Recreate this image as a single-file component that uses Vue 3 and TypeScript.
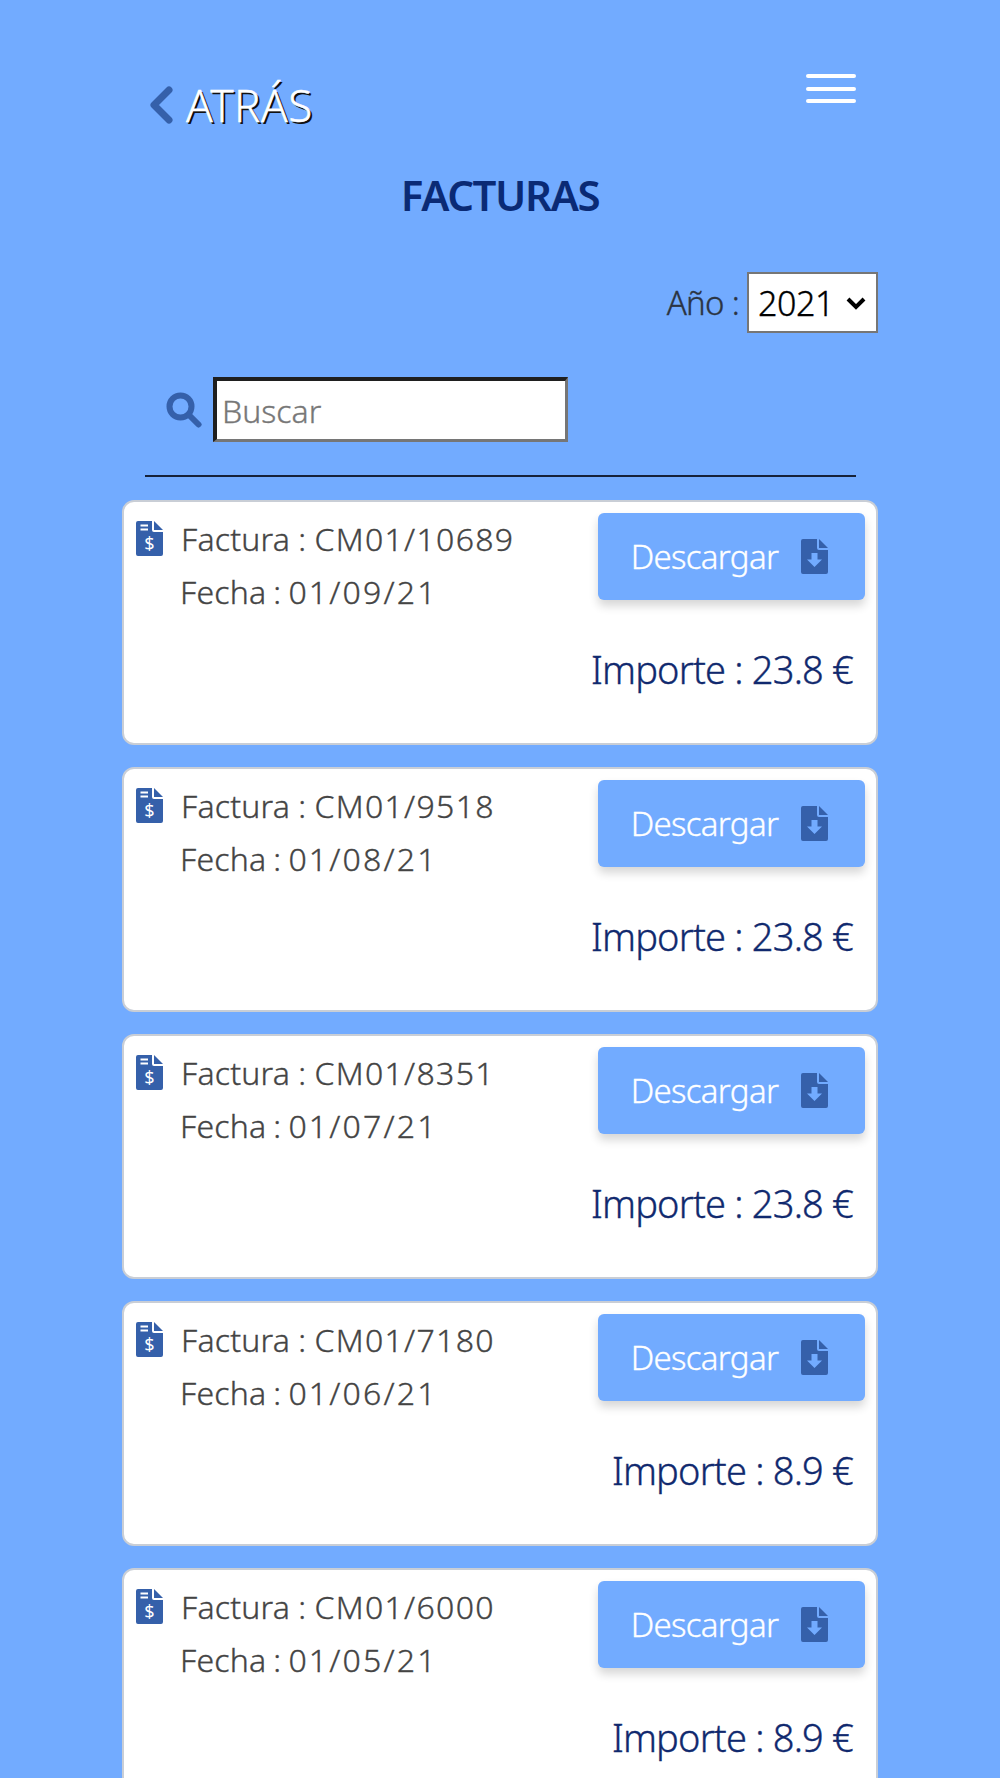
<template>
  <div class="page">
    <header class="top">
      <a class="back">
        <svg class="chevron" viewBox="0 0 24 38">
          <polyline points="20,4 5,19 20,34" />
        </svg>
        <span>ATRÁS</span>
      </a>
      <button class="burger" aria-label="Menu"><i></i><i></i><i></i></button>
    </header>

    <h1 class="title">FACTURAS</h1>

    <div class="year">
      <label for="year">Año :</label>
      <div class="select-wrap">
        <select id="year">
          <option>2021</option>
        </select>
        <svg class="select-arrow" viewBox="0 0 20 13">
          <polyline points="2,2 10,10 18,2" />
        </svg>
      </div>
    </div>

    <div class="search">
      <svg class="search-icon" viewBox="0 0 36 36">
        <circle cx="14.5" cy="14.5" r="11" />
        <line x1="23" y1="23" x2="32.5" y2="32.5" />
      </svg>
      <input type="text" placeholder="Buscar" />
    </div>

    <hr class="rule" />

    <ul class="list">
      <li v-for="f in facturas" :key="f.numero" class="card">
        <div class="card-top">
          <svg class="doc" viewBox="0 0 27 35">
            <path d="M2 0H16V9a2 2 0 0 0 2 2H27V33a2 2 0 0 1-2 2H2a2 2 0 0 1-2-2V2a2 2 0 0 1 2-2Z" />
            <path d="M18 0 27 9H18Z" />
            <path class="cut" d="M4.5 4.5H12M4.5 8.5H12" />
            <text x="13.5" y="29" text-anchor="middle">$</text>
          </svg>
          <div class="info">
            <p class="numero">Factura : <span>{{ f.numero }}</span></p>
            <p class="fecha">Fecha : <span>{{ f.fecha }}</span></p>
          </div>
          <button class="download">
            Descargar
            <svg class="doc-down" viewBox="0 0 27 35">
              <path d="M2 0H16V9a2 2 0 0 0 2 2H27V33a2 2 0 0 1-2 2H2a2 2 0 0 1-2-2V2a2 2 0 0 1 2-2Z" />
              <path d="M18 0 27 9H18Z" />
              <path class="arrow" d="M10.5 14H16.5V20.5H21L13.5 28 6 20.5H10.5Z" />
            </svg>
          </button>
        </div>
        <p class="importe">Importe : {{ f.importe }} €</p>
      </li>
    </ul>
  </div>
</template>

<script setup lang="ts">
interface Factura {
  numero: string
  fecha: string
  importe: string
}

const facturas: Factura[] = [
  { numero: 'CM01/10689', fecha: '01/09/21', importe: '23.8' },
  { numero: 'CM01/9518', fecha: '01/08/21', importe: '23.8' },
  { numero: 'CM01/8351', fecha: '01/07/21', importe: '23.8' },
  { numero: 'CM01/7180', fecha: '01/06/21', importe: '8.9' },
  { numero: 'CM01/6000', fecha: '01/05/21', importe: '8.9' },
]
</script>

<style>
html,
body {
  background: #72abff;
}
</style>

<style scoped>
.page {
  box-sizing: border-box;
  width: 1000px;
  height: 1778px;
  overflow: hidden;
  padding: 0 122px;
  background: #72abff;
  font-family: 'Noto Sans', 'Open Sans', sans-serif;
}

.top {
  display: flex;
  justify-content: space-between;
  align-items: flex-start;
  height: 69px;
  padding: 74px 22px 0 27px;
}

.back {
  display: flex;
  align-items: center;
  gap: 13px;
  margin-top: 8px;
  color: #fff;
  font-size: 44px;
  font-weight: 300;
  line-height: 46px;
  letter-spacing: 0.5px;
  text-shadow: 2px 2px 0 #111;
  -webkit-text-stroke: 0.4px #fff;
}

.chevron {
  width: 24px;
  height: 38px;
}

.chevron polyline {
  fill: none;
  stroke: #3560aa;
  stroke-width: 7;
  stroke-linecap: round;
  stroke-linejoin: round;
}

.burger {
  display: flex;
  flex-direction: column;
  gap: 8.5px;
  width: 50px;
  padding: 0;
  border: 0;
  background: none;
}

.burger i {
  display: block;
  height: 4px;
  border-radius: 2px;
  background: #fff;
}

.title {
  margin: 27px 0 0;
  text-align: center;
  color: #0a2a75;
  font-size: 42px;
  line-height: 50px;
  font-weight: 600;
  letter-spacing: -1.4px;
}

.year {
  display: flex;
  justify-content: flex-end;
  align-items: center;
  gap: 8px;
  margin-top: 52px;
  color: #2b3442;
  font-size: 33px;
  font-weight: 300;
  letter-spacing: -0.7px;
  -webkit-text-stroke: 0.35px #2b3442;
}

.select-wrap {
  position: relative;
  display: flex;
}

.select-wrap select {
  box-sizing: border-box;
  width: 131px;
  height: 61px;
  padding: 0 0 0 9px;
  border: 2px solid #767676;
  border-radius: 0;
  background: #fff;
  color: #000;
  font-family: inherit;
  font-size: 34px;
  font-weight: 300;
  letter-spacing: -0.4px;
  -webkit-text-stroke: 0.35px #000;
  appearance: none;
}

.select-arrow {
  position: absolute;
  top: 25px;
  right: 12px;
  width: 20px;
  height: 13px;
  pointer-events: none;
}

.select-arrow polyline {
  fill: none;
  stroke: #000;
  stroke-width: 4;
}

.search {
  display: flex;
  align-items: center;
  gap: 11px;
  margin-top: 44px;
  padding-left: 44px;
}

.search-icon {
  width: 36px;
  height: 36px;
}

.search-icon circle,
.search-icon line {
  fill: none;
  stroke: #3560aa;
  stroke-width: 6;
  stroke-linecap: round;
}

.search input {
  box-sizing: border-box;
  width: 355px;
  height: 65px;
  padding: 0 5px;
  border-width: 4px 3px 3px 4px;
  border-style: solid;
  border-color: #1f1f1f #767676 #767676 #1f1f1f;
  background: #fff;
  font-family: inherit;
  font-size: 32px;
  font-weight: 300;
  -webkit-text-stroke: 0.35px #777;
}

.search input::placeholder {
  color: #777;
  opacity: 1;
}

.rule {
  margin: 33px 22px 0 23px;
  height: 2px;
  border: 0;
  background: #16223a;
}

.list {
  display: flex;
  flex-direction: column;
  gap: 22px;
  margin: 23px 0 0;
  padding: 0;
  list-style: none;
}

.card {
  box-sizing: border-box;
  height: 245px;
  padding: 11px 11px 0 11px;
  border: 2px solid #c9ced6;
  border-radius: 12px;
  background: #fff;
}

.card-top {
  display: flex;
  align-items: flex-start;
}

.doc {
  flex: none;
  width: 27px;
  height: 35px;
  margin-top: 8px;
  margin-left: 1px;
  fill: #3560aa;
}

.doc .cut {
  fill: none;
  stroke: #fff;
  stroke-width: 2;
}

.doc text {
  fill: #fff;
  font-size: 18px;
  font-weight: 400;
}

.info {
  flex: 1;
  margin-top: -1px;
  padding-left: 18px;
  color: #444;
  font-size: 32px;
  font-weight: 300;
  letter-spacing: 0.2px;
  -webkit-text-stroke: 0.35px #444;
}

.info p {
  margin: 0;
  line-height: 53px;
}

.numero {
  word-spacing: -0.3px;
}

.numero span {
  letter-spacing: 1.3px;
}

.fecha {
  margin-left: -1px !important;
  word-spacing: -1.5px;
}

.fecha span {
  letter-spacing: 2.2px;
}

.download {
  flex: none;
  display: flex;
  align-items: center;
  justify-content: center;
  gap: 23px;
  width: 267px;
  height: 87px;
  padding: 0 4px 0 0;
  border: 0;
  border-radius: 6px;
  background: #72abff;
  box-shadow: 0 6px 10px rgba(0, 0, 0, 0.16);
  color: #fff;
  font-family: inherit;
  font-size: 33px;
  font-weight: 300;
  letter-spacing: -0.7px;
  -webkit-text-stroke: 0.35px #fff;
}

.doc-down {
  width: 27px;
  height: 35px;
  fill: #3560aa;
}

.doc-down .arrow {
  fill: #72abff;
}

.importe {
  margin: 26px 12px 0 0;
  text-align: right;
  color: #10296e;
  font-size: 38px;
  font-weight: 300;
  line-height: 50px;
  letter-spacing: -0.8px;
  -webkit-text-stroke: 0.35px #10296e;
}
</style>
